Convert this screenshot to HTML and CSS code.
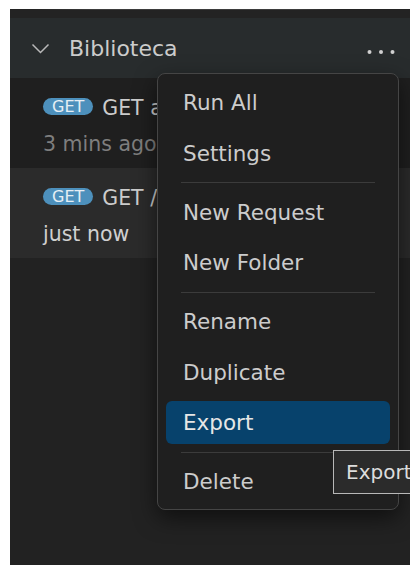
FILE: index.html
```html
<!DOCTYPE html>
<html lang="es">
<head>
<meta charset="utf-8">
<title>Biblioteca</title>
<link rel="stylesheet" href="styles.css">
</head>
<body>
<div class="panel">
  <div class="topbar"><span class="topline"></span></div>
  <div class="header">
    <svg class="chev" width="19" height="11" viewBox="0 0 19 11"><path d="M1.5 1.5 L9.5 9.5 L17.5 1.5"/></svg>
    <span class="title">Biblioteca</span>
    <svg class="more" width="28" height="6" viewBox="0 0 28 6"><circle cx="2.5" cy="3" r="2"/><circle cx="14" cy="3" r="2"/><circle cx="25.5" cy="3" r="2"/></svg>
  </div>
  <div class="list">
    <div class="row">
      <div class="line1"><span class="badge">GET</span><span class="name">GET api</span></div>
      <div class="line2 muted">3 mins ago</div>
    </div>
    <div class="row selected">
      <div class="line1"><span class="badge">GET</span><span class="name">GET /</span></div>
      <div class="line2">just now</div>
    </div>
  </div>

  <div class="menu">
    <div class="item">Run All</div>
    <div class="item">Settings</div>
    <div class="sep"></div>
    <div class="item">New Request</div>
    <div class="item">New Folder</div>
    <div class="sep"></div>
    <div class="item">Rename</div>
    <div class="item">Duplicate</div>
    <div class="item active">Export</div>
    <div class="sep"></div>
    <div class="item">Delete</div>
  </div>

  <div class="tooltip">Export</div>
</div>
</body>
</html>
```

FILE: styles.css
```css
html, body {
  margin: 0;
  padding: 0;
  background: #ffffff;
  overflow: hidden;
}

.panel {
  position: relative;
  margin: 9px 0 0 10px;
  height: 556px;
  background: #222222;
  overflow: hidden;
  font-family: "DejaVu Sans", sans-serif;
  color: #cccccc;
}

.topbar {
  height: 9px;
  background: #232323;
  display: flex;
  padding-left: 23px;
}

.topline {
  width: 309px;
  height: 1px;
  background: linear-gradient(90deg, rgba(70,70,70,0) 0%, #3d3d3d 20%, #3d3d3d 85%, rgba(70,70,70,0) 100%);
}

.header {
  height: 60px;
  background: #282c2d;
  display: flex;
  align-items: center;
  padding-left: 21px;
  padding-right: 15px;
}

.chev {
  flex: none;
}
.chev path {
  fill: none;
  stroke: #b9b9b9;
  stroke-width: 1.5;
}

.title {
  margin-left: 19px;
  font-size: 22px;
  color: #cccccc;
  flex: 1;
}

.more {
  flex: none;
  margin-top: 8px;
}
.more circle {
  fill: #d0d0d0;
}

.list {
  background: #1f1f1f;
}

.row {
  padding: 12px 0 6px 33px;
  white-space: nowrap;
}

.row.selected {
  background: #2b2b2b;
}

.line1 {
  display: flex;
  align-items: center;
  height: 36px;
}

.badge {
  flex: none;
  height: 17px;
  line-height: 17px;
  padding: 0 9px;
  margin: 0 9px 4px 0;
  border-radius: 9px;
  background: #4d90bc;
  color: #e6eef4;
  font-size: 16px;
}

.name {
  font-size: 20.5px;
  color: #cccccc;
}

.line2 {
  font-size: 20.5px;
  line-height: 36px;
  color: #d0d0d0;
}

.line2.muted {
  color: #7e7e7e;
}

/* context menu */
.menu {
  position: absolute;
  left: 147px;
  top: 64px;
  box-sizing: border-box;
  width: 242px;
  padding: 7px 8px 6px;
  background: #1f1f1f;
  border: 1px solid #454545;
  border-radius: 8px;
  box-shadow: 0 8px 22px rgba(0, 0, 0, 0.55);
  display: flex;
  flex-direction: column;
  gap: 7.5px;
}

.item {
  height: 43px;
  line-height: 43px;
  padding-left: 17px;
  border-radius: 6px;
  font-size: 21.5px;
  color: #cccccc;
}

.item.active {
  background: #07426c;
  color: #e6e6e6;
}

.sep {
  height: 1px;
  margin: 0 15px;
  background: #3b3b3b;
}

.tooltip {
  position: absolute;
  left: 323px;
  top: 441px;
  height: 42px;
  padding: 0 20px 0 12px;
  display: flex;
  align-items: center;
  background: #2b2b2b;
  border: 1px solid #b8b8b8;
  font-size: 20px;
  color: #dddddd;
  white-space: nowrap;
}
```
